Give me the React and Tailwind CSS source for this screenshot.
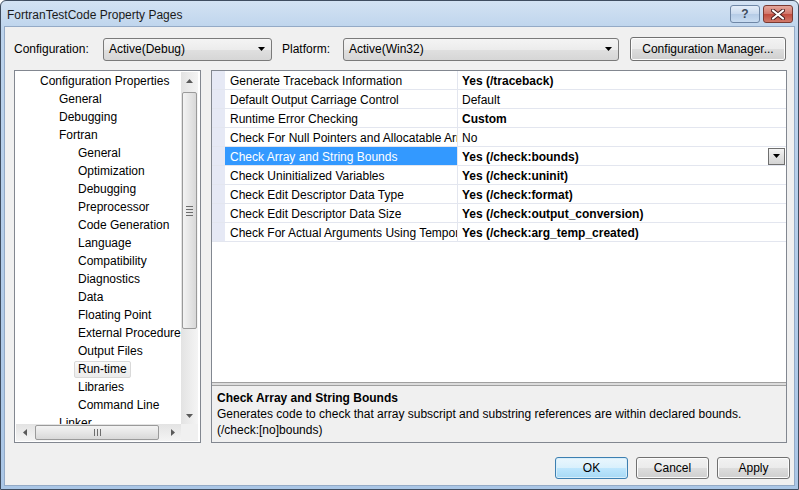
import React from 'react'

const treeItems = [
  ['Configuration Properties', 0],
  ['General', 1],
  ['Debugging', 1],
  ['Fortran', 1],
  ['General', 2],
  ['Optimization', 2],
  ['Debugging', 2],
  ['Preprocessor', 2],
  ['Code Generation', 2],
  ['Language', 2],
  ['Compatibility', 2],
  ['Diagnostics', 2],
  ['Data', 2],
  ['Floating Point', 2],
  ['External Procedures', 2],
  ['Output Files', 2],
  ['Run-time', 2, true],
  ['Libraries', 2],
  ['Command Line', 2],
  ['Linker', 1],
]

const rows = [
  ['Generate Traceback Information', 'Yes (/traceback)', true],
  ['Default Output Carriage Control', 'Default', false],
  ['Runtime Error Checking', 'Custom', true],
  ['Check For Null Pointers and Allocatable Array Bounds', 'No', false],
  ['Check Array and String Bounds', 'Yes (/check:bounds)', true, true],
  ['Check Uninitialized Variables', 'Yes (/check:uninit)', true],
  ['Check Edit Descriptor Data Type', 'Yes (/check:format)', true],
  ['Check Edit Descriptor Data Size', 'Yes (/check:output_conversion)', true],
  ['Check For Actual Arguments Using Temporary Storage', 'Yes (/check:arg_temp_created)', true],
]

function Arrow({ dir = 'down', className = '' }) {
  const paths = {
    down: 'M0 0h7L3.5 4z',
    up: 'M0 4h7L3.5 0z',
    left: 'M4 0v7L0 3.5z',
    right: 'M0 0v7L4 3.5z',
  }
  const vert = dir === 'up' || dir === 'down'
  return (
    <svg width={vert ? 7 : 4} height={vert ? 4 : 7} viewBox={vert ? '0 0 7 4' : '0 0 4 7'} className={className}>
      <path d={paths[dir]} fill="currentColor" />
    </svg>
  )
}

function Combo({ value, width }) {
  return (
    <div
      className={`${width} h-[23px] flex items-center justify-between pl-[5px] pr-[5px] border border-[#7a7a7a] rounded-[3px] bg-[linear-gradient(to_bottom,#f4f4f4_0%,#ececec_50%,#e0e0e0_50%,#d6d6d6_100%)]`}
    >
      <span>{value}</span>
      <Arrow dir="down" className="text-black mr-[1px]" />
    </div>
  )
}

function Button({ children, width = 'w-[73px]', primary = false, height = 'h-[22px]' }) {
  return (
    <div
      className={`${width} ${height} flex items-center justify-center rounded-[3px] border ${
        primary
          ? 'border-[#3c7fb1] bg-[linear-gradient(to_bottom,#eaf6fd_0%,#d9f0fc_50%,#bee6fd_50%,#a7d9f5_100%)] shadow-[inset_0_0_0_1px_#d8eefa]'
          : 'border-[#707070] bg-[linear-gradient(to_bottom,#f2f2f2_0%,#ebebeb_50%,#dddddd_50%,#cfcfcf_100%)] shadow-[inset_0_0_0_1px_#fcfcfc]'
      }`}
    >
      {children}
    </div>
  )
}

function Tree() {
  return (
    <div className="w-[187px] h-[373px] border border-[#828790] bg-white p-[1px] flex flex-col">
      <div className="flex h-[352px]">
        <div className="w-[165px] h-[352px] overflow-hidden">
          {treeItems.map(([label, level, selected], i) => (
            <div key={i} className="h-[18px] pt-[1px] flex items-center whitespace-nowrap">
              <span
                className={`${level === 0 ? 'ml-[20px]' : level === 1 ? 'ml-[39px]' : 'ml-[58px]'} px-[3px] h-[17px] leading-[15px] border rounded-[2px] ${
                  selected
                    ? 'border-[#d9d9d9] bg-[linear-gradient(to_bottom,#fafafa,#ebebeb)]'
                    : 'border-transparent'
                }`}
              >
                {label}
              </span>
            </div>
          ))}
        </div>
        {/* vertical scrollbar */}
        <div className="w-[17px] h-[352px] flex flex-col bg-[linear-gradient(to_right,#e3e3e3,#f4f4f4)]">
          <div className="h-[17px] flex items-center justify-center text-[#5a5a5a]">
            <Arrow dir="up" />
          </div>
          <div className="h-[3px]" />
          <div className="mx-[1px] h-[237px] rounded-[2px] border border-[#9a9a9a] bg-[linear-gradient(to_right,#f3f3f3,#e6e6e6_50%,#d8d8d8)] flex items-center justify-center">
            <div className="flex flex-col gap-[2px]">
              <div className="w-[7px] h-[1px] bg-[#6d6d6d]" />
              <div className="w-[7px] h-[1px] bg-[#6d6d6d]" />
              <div className="w-[7px] h-[1px] bg-[#6d6d6d]" />
              <div className="w-[7px] h-[1px] bg-[#6d6d6d]" />
            </div>
          </div>
          <div className="flex-1" />
          <div className="h-[17px] flex items-center justify-center text-[#5a5a5a]">
            <Arrow dir="down" />
          </div>
        </div>
      </div>
      {/* horizontal scrollbar */}
      <div className="flex h-[17px]">
        <div className="w-[165px] h-[17px] flex items-center bg-[linear-gradient(to_bottom,#e3e3e3,#f4f4f4)]">
          <div className="w-[17px] flex items-center justify-center text-[#5a5a5a]">
            <Arrow dir="left" />
          </div>
          <div className="ml-[2px] w-[124px] h-[15px] rounded-[2px] border border-[#9a9a9a] bg-[linear-gradient(to_bottom,#f3f3f3,#e6e6e6_50%,#d8d8d8)] flex items-center justify-center">
            <div className="flex gap-[2px]">
              <div className="w-[1px] h-[7px] bg-[#6d6d6d]" />
              <div className="w-[1px] h-[7px] bg-[#6d6d6d]" />
              <div className="w-[1px] h-[7px] bg-[#6d6d6d]" />
            </div>
          </div>
          <div className="flex-1" />
          <div className="w-[17px] flex items-center justify-center text-[#5a5a5a]">
            <Arrow dir="right" />
          </div>
        </div>
        <div className="w-[17px] h-[17px] bg-[#f0f0f0]" />
      </div>
    </div>
  )
}

function Grid() {
  return (
    <div className="w-[576px] h-[373px] border border-[#828790] flex flex-col">
      <div className="h-[311px] bg-white">
        {rows.map(([name, value, bold, selected], i) => (
          <div key={i} className="flex h-[19px] border-b border-[#e3e6ef]">
            <div className="w-[13px] bg-[#e6e9f5]" />
            <div
              className={`w-[233px] pl-[5px] pt-[2px] flex items-center overflow-hidden whitespace-nowrap border-r border-[#e3e6ef] ${
                selected ? 'bg-[#3399ff] text-white' : ''
              }`}
            >
              {name}
            </div>
            <div className={`flex-1 pl-[4px] flex items-center justify-between ${bold ? 'font-bold' : ''}`}>
              <span className="pt-[2px]">{value}</span>
              {selected && (
                <div className="w-[17px] h-[17px] mr-[1px] border border-[#6f6f6f] bg-[linear-gradient(to_bottom,#f4f4f4,#e2e2e2_50%,#d4d4d4)] flex items-center justify-center">
                  <Arrow dir="down" />
                </div>
              )}
            </div>
          </div>
        ))}
      </div>
      <div className="h-[1px] bg-[#a0a0a0]" />
      <div className="h-[2px] bg-[#dcdcdc]" />
      <div className="h-[1px] bg-[#a0a0a0]" />
      <div className="flex-1 bg-[#f0f0f0] px-[5px] pt-[4px] leading-[16px]">
        <div className="font-bold">Check Array and String Bounds</div>
        <div>
          Generates code to check that array subscript and substring references are within declared bounds.
        </div>
        <div>(/check:[no]bounds)</div>
      </div>
    </div>
  )
}

export default function App() {
  return (
    <div className="w-[799px] h-[490px] flex flex-col border border-[#3f4d60] rounded-t-[6px] bg-[linear-gradient(to_bottom,#d3e2f3,#bcd3ec_30px,#aac6e6)] text-[12px] text-black font-['Liberation_Sans',Arial,sans-serif] overflow-hidden">
      {/* title bar */}
      <div className="h-[25px] flex items-start justify-between">
        <div className="pl-[6px] pt-[7px] leading-[14px] text-[#1a1a1a]">FortranTestCode Property Pages</div>
        <div className="flex gap-[3px] pt-[4px] pr-[5px]">
          <div className="w-[30px] h-[18px] rounded-[3px] border border-[#6f87a6] bg-[linear-gradient(to_bottom,#e4eef9,#c8d9ee_50%,#b4cbe6_50%,#c9dcf1)] flex items-center justify-center text-[12px] font-bold text-[#3c4a5c] leading-none">
            ?
          </div>
          <div className="w-[30px] h-[18px] rounded-[3px] border border-[#7a3a32] bg-[linear-gradient(to_bottom,#e4a79b,#d1756a_50%,#c0493b_50%,#d0796a)] flex items-center justify-center">
            <svg width="14" height="11" viewBox="0 0 14 11">
              <path d="M2 1.5L12 9.5M12 1.5L2 9.5" stroke="#4a2020" strokeWidth="4" strokeLinecap="round" />
              <path d="M2 1.5L12 9.5M12 1.5L2 9.5" stroke="#ffffff" strokeWidth="2.2" strokeLinecap="round" />
            </svg>
          </div>
        </div>
      </div>

      {/* content */}
      <div className="flex-1 mx-[3px] mb-[3px] border border-[#94aac6] bg-[#f0f0f0] flex flex-col pl-[9px] pt-[10px]">
        <div className="flex items-center h-[24px]">
          <div className="w-[89px]">Configuration:</div>
          <Combo value="Active(Debug)" width="w-[169px]" />
          <div className="ml-[10px] w-[61px]">Platform:</div>
          <Combo value="Active(Win32)" width="w-[276px]" />
          <div className="ml-[11px]">
            <Button width="w-[156px]" height="h-[24px]">Configuration Manager...</Button>
          </div>
        </div>

        <div className="flex mt-[9px] gap-[10px]">
          <Tree />
          <Grid />
        </div>

        <div className="flex mt-[14px] ml-[541px] gap-[8px]">
          <Button primary>OK</Button>
          <Button>Cancel</Button>
          <Button>Apply</Button>
        </div>
      </div>
    </div>
  )
}
